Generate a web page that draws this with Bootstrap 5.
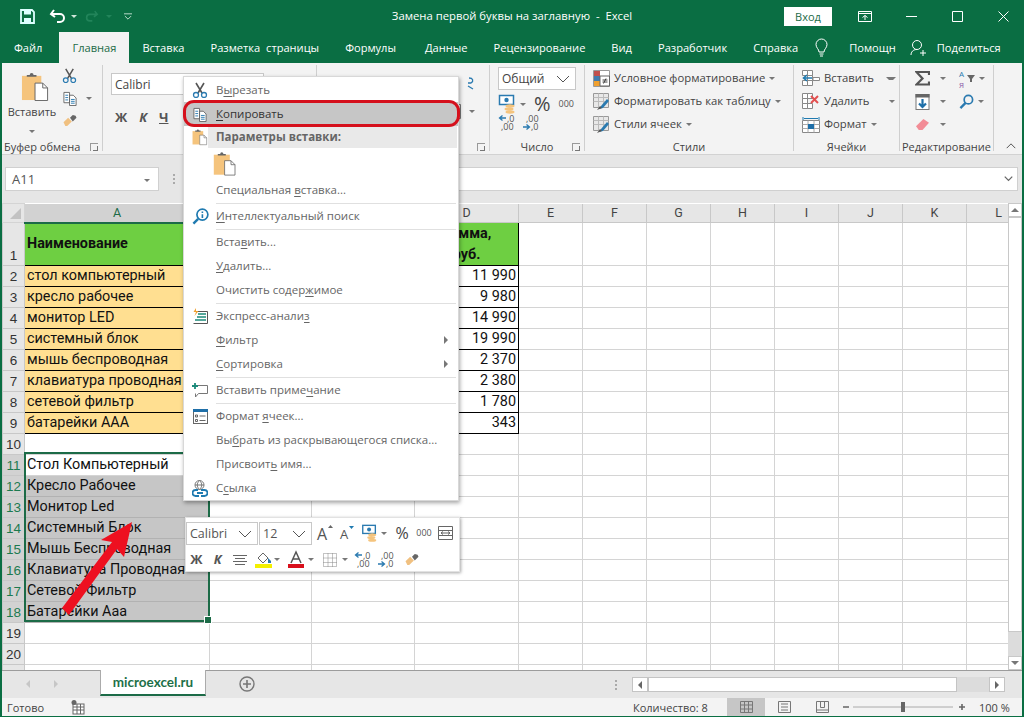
<!DOCTYPE html>
<html lang="ru">
<head>
    <meta charset="UTF-8">
    <meta name="viewport" content="width=device-width, initial-scale=1.0">
    <title>Замена первой буквы на заглавную - Excel</title>
    <link href="https://cdn.jsdelivr.net/npm/bootstrap@5.3.0/dist/css/bootstrap.min.css" rel="stylesheet">
    <style>
        html, body { margin: 0; height: 717px; overflow: hidden; }
        body { width: 1024px; font-family: "Open Sans", "Liberation Sans", sans-serif; font-size: 11px; color: #444; background: #e6e6e6; }
        svg { display: block; flex: none; overflow: visible; }
        .app { position: relative; width: 1024px; height: 717px; border-left: 2px solid #0a6e43; border-right: 2px solid #0a6e43; border-bottom: 1px solid #0a6e43; }
        .drop { width: 0; height: 0; border-left: 3px solid transparent; border-right: 3px solid transparent; border-top: 3px solid #777; flex: none; }
        .drop.lite { border-top-color: #cfe6da; }
        .drop.dim { border-top-color: #22845a; }
        .ml3 { margin-left: 3px; } .ml5 { margin-left: 5px; } .ml6 { margin-left: 6px; } .ml9 { margin-left: 9px; } .ml10 { margin-left: 10px; } .ml15 { margin-left: 15px; }

        /* title bar and tabs */
        .xl-green { background: #0a6e43; color: #fff; margin-left: -2px; margin-right: -2px; }
        .titlebar { height: 32px; display: grid; grid-template-columns: 1fr auto 1fr; align-items: center; font-size: 11.3px; }
        .qat { padding-left: 20px; }
        .win-wrap { margin-right: -2px; }
        .login { width: 48px; height: 19px; background: #fff; color: #1c6b47; line-height: 19px; text-align: center; font-size: 11px; margin-right: 10px; }
        .winbtn { width: 46px; display: flex; justify-content: center; }
        .tabsbar { height: 31px; padding-left: 1px; font-size: 11.1px; }
        .rtab { padding: 0 13px; height: 31px; line-height: 32px; white-space: nowrap; }
        .rtab.active { background: #f3f3f3; color: #1c6b47; }
        .rtab.first { padding-right: 17px; }
        .rtab.wide { word-spacing: 3px; }
        .rtab.pad-r { padding-right: 16px; }
        .rtab.help { padding: 0; margin-left: 21px; }
        .rtab.share { padding: 0; margin-left: 11px; }
        .bulb { margin-left: 4px; }
        .person { margin-left: 14px; }

        /* ribbon */
        .ribbon { height: 92px; background: #f3f3f3; border-bottom: 1px solid #d2d2d2; display: flex; position: relative; }
        .rgroup { position: relative; border-right: 1px solid #cfcfcf; height: 86px; margin-top: 2px; flex: none; }
        .rgroup-label { position: absolute; left: 0; right: 0; bottom: -4px; text-align: center; white-space: nowrap; line-height: 16px; color: #444; font-size: 11px; }
        .rgroup-label.lead-in { text-align: left; padding-left: 2px; }
        .launcher { position: absolute; right: 4px; bottom: 0; width: 8px; height: 8px; border-left: 1px solid #999; border-top: 1px solid #999; }
        .launcher::after { content: ""; position: absolute; right: 0; bottom: 0; width: 5px; height: 5px; border-right: 1px solid #777; border-bottom: 1px solid #777; }
        .g-clip { width: 101px; }
        .g-font { width: 214px; }
        .g-align { width: 173px; }
        .g-num { width: 95px; }
        .g-styles { width: 209px; padding: 2px 0 0 8px; }
        .g-cells { width: 106px; padding: 2px 0 0 8px; }
        .g-edit { width: 94px; padding: 2px 0 0 15px; }
        .paste-col { width: 60px; text-align: center; }
        .paste-col svg { margin: 7px auto 3px 19px; }
        .clip-col { padding-top: 3px; gap: 8px; }
        .inbox { background: #fff; border: 1px solid #c8c8c8; height: 23px; line-height: 21px; padding-left: 3px; color: #444; font-size: 12px; position: relative; }
        .font-name { margin: 8px 0 0 8px; width: 153px; height: 22px; }
        .font-btns { gap: 12px; margin: 14px 0 0 12px; font-weight: 700; font-size: 13px; color: #555; line-height: 16px; }
        .num-box { width: 78px; margin: 2px 0 0 8px; font-size: 12px; }
        .chev { position: absolute; right: 5px; top: 7px; }
        .style-row { height: 23px; gap: 4px; white-space: nowrap; font-size: 11.3px; }
        .zeros { font-size: 9px; color: #555; }
        .align-rest { padding: 12px 14px 0 0; gap: 14px; }
        .fig { font-family: "Open Sans", sans-serif; fill: #555; }
        .sort-a { fill: #2a7ab0; }
        .sort-z { fill: #8a5aa8; }
        .collapse-btn { margin: auto 6px 5px auto; }

        /* formula bar */
        .fxbar { height: 48px; padding: 12px 4px 12px 3px; }
        .namebox { width: 154px; height: 24px; background: #fff; border: 1px solid #d0d0d0; padding-left: 6px; line-height: 22px; font-size: 13px; color: #555; position: relative; }
        .gripdots { margin: 0 8px 0 14px; align-self: center; gap: 2px; }
        .gripdots i { display: block; width: 2px; height: 2px; background: #aaa; }
        .fxinput { flex: 1; height: 24px; background: #fff; border: 1px solid #d0d0d0; position: relative; }

        /* grid */
        .sheet-wrap { position: relative; height: 467px; overflow: hidden; background: #fff; }
        .sheet { table-layout: fixed; border-collapse: collapse; width: 1028px; font-family: Roboto, "Liberation Sans", sans-serif; font-size: 14.4px; color: #111; }
        .c-rh { width: 22px; } .c-a { width: 185px; } .c-b { width: 102px; } .c-c { width: 103px; } .c-d { width: 104px; } .c-n { width: 64px; }
        .sheet td, .sheet th { border: 1px solid #d4d4d4; padding: 0 2px; height: 21px; line-height: 18px; white-space: nowrap; overflow: visible; }
        .sheet .corner { background: #e6e6e6; height: 19px; position: relative; }
        .corner::after { content: ""; position: absolute; right: 3px; bottom: 3px; border-left: 11px solid transparent; border-bottom: 11px solid #c2c2c2; }
        .sheet th.colh { background: #e6e6e6; font-weight: 400; text-align: center; color: #444; font-size: 12.5px; height: 19px; border-color: #c8c8c8; border-top: 0; padding: 0; }
        .sheet th.colh.sel { background: #d2d2d2; color: #1c6b47; border-bottom: 2px solid #1c6b47; }
        .sheet td.rowh { background: #e6e6e6; text-align: center; color: #333; font-size: 13.5px; padding: 0; border-color: #c8c8c8; vertical-align: bottom; font-family: "Liberation Sans", sans-serif; }
        .sheet td.rowh.sel { background: #d2d2d2; color: #1c7a50; }
        .sheet tr.tall td { height: 42px; }
        .sheet td.hd { background: #6ecf42; font-weight: 700; border: 1px solid #000; }
        .sheet td.hd2 { white-space: normal; text-align: center; line-height: 21px; }
        .sheet td.yl { background: #ffdf91; border: 1px solid #000; }
        .sheet td.bd { border: 1px solid #000; }
        .sheet td.num { text-align: right; }
        .sheet td.gr { background: #c6c6c6; border-color: #b2b2b2; }
        .selbox { position: absolute; left: 22px; top: 249px; width: 186px; height: 170px; border: 2px solid #1c6b47; pointer-events: none; }
        .selbox::after { content: ""; position: absolute; right: -4px; bottom: -4px; width: 6px; height: 6px; background: #1c6b47; border: 1px solid #fff; box-sizing: content-box; }
        .vscroll { position: absolute; right: 0; top: 0; bottom: 0; width: 14px; background: #dcdcdc; display: flex; flex-direction: column; }
        .vs-btn { height: 14px; background: #fff; border: 1px solid #c8c8c8; flex: none; }
        .vs-thumb { height: 415px; background: #fff; border: 1px solid #c8c8c8; flex: none; }
        .vs-down { margin-top: auto; }
        .vs-arrow { margin: 4px auto 0; width: 0; height: 0; border-left: 4px solid transparent; border-right: 4px solid transparent; border-bottom: 4px solid #777; }
        .vs-down .vs-arrow { border-bottom: 0; border-top: 4px solid #777; }

        /* sheet tabs */
        .tabstrip { height: 28px; border-top: 1px solid #9c9c9c; position: relative; align-items: flex-start; }
        .nav-tri { width: 0; height: 0; margin-top: 9px; border-top: 4px solid transparent; border-bottom: 4px solid transparent; flex: none; }
        .nav-tri.back { margin-left: 24px; border-right: 4px solid #c6c6c6; }
        .nav-tri.fwd { margin-left: 24px; border-left: 4px solid #c6c6c6; }
        .stab { width: 106px; margin-left: 42px; height: 26px; margin-top: -1px; background: #fff; border-left: 1px solid #ababab; border-right: 1px solid #ababab; border-bottom: 2px solid #1c6b47; color: #1c7048; font-family: Lato, "Open Sans", sans-serif; font-weight: 700; font-size: 13.5px; text-align: center; line-height: 24px; flex: none; }
        .add-sheet { margin: 5px 0 0 33px; }
        .tabdots { margin: 9px 0 0 360px; gap: 2px; }
        .tabdots i { display: block; width: 2px; height: 2px; background: #aaa; }
        .hsbar { margin: 6px 0 0 15px; height: 15px; background: #dcdcdc; width: 373px; }
        .hs-btn { width: 16px; height: 15px; background: #fff; border: 1px solid #c4c4c4; display: flex; align-items: center; justify-content: center; flex: none; }
        .hs-thumb { width: 309px; height: 15px; background: #fff; border: 1px solid #c4c4c4; flex: none; }
        .hs-l { border-right: 4px solid #666; border-top: 4px solid transparent; border-bottom: 4px solid transparent; }
        .hs-r { border-left: 4px solid #666; border-top: 4px solid transparent; border-bottom: 4px solid transparent; }
        .statusbar { height: 18px; background: #f3f3f3; line-height: 17px; font-size: 11px; padding-left: 5px; white-space: nowrap; }
        .st-ready { width: 64px; flex: none; }
        .st-count { width: 76px; margin-left: 548px; flex: none; }
        .st-norm { margin-left: 18px; width: 38px; height: 18px; background: #c6c6c6; display: flex; justify-content: center; align-items: center; flex: none; }
        .st-page { margin-left: 13px; }
        .st-break { margin-left: 25px; }
        .st-zoom { margin-left: 14px; }
        .st-pct { margin-left: 14px; }

        /* context menu */
        .ctx { position: absolute; left: 181px; top: 76px; width: 276px; height: 425px; background: #fff; box-shadow: 1px 2px 4px rgba(0,0,0,.35); border: 1px solid #d8d8d8; padding-top: 1px; font-size: 11.5px; color: #666; z-index: 5; }
        .ctx-item { height: 24px; display: flex; align-items: center; position: relative; }
        .ctx-ico { width: 32px; flex: none; display: flex; justify-content: center; }
        .ctx-item.hot { background: #c6c6c6; color: #333; }
        .ctx-item u { text-underline-offset: 2px; }
        .ctx-head { height: 22px; display: flex; align-items: center; font-weight: 700; color: #666; }
        .ctx-head span { flex: 1; background: #e9e9e9; height: 22px; line-height: 22px; padding-left: 8px; margin-left: -8px; margin-right: 1px; }
        .ctx-paste { height: 30px; padding-left: 29px; }
        .ctx-sep { height: 1px; background: #e0e0e0; margin: 1px 2px 0 32px; }
        .ctx-arrow { position: absolute; right: 10px; top: 8px; border-left: 4px solid #777; border-top: 4px solid transparent; border-bottom: 4px solid transparent; }
        .redmark { position: absolute; left: -1px; top: 23px; width: 277px; height: 27px; border: 3px solid #d5101c; border-radius: 11px; pointer-events: none; }

        /* mini toolbar */
        .mini { position: absolute; left: 183px; top: 517px; width: 275px; height: 55px; background: #fff; box-shadow: 1px 1px 3px rgba(0,0,0,.35); border: 1px solid #e2e2e2; z-index: 5; padding-top: 3px; }
        .mini-box { height: 23px; border: 1px solid #c8c8c8; line-height: 21px; padding-left: 3px; font-size: 12.5px; position: relative; color: #555; flex: none; }
        .mini-font { width: 72px; }
        .mini-size { width: 53px; margin-left: 1px; }
        .mini-row2 { margin-top: 5px; font-size: 13px; color: #555; }
        .slot { display: flex; justify-content: center; flex: none; align-items: center; }
        .w21 { width: 21px; } .w22 { width: 22px; } .w24 { width: 24px; }
        .mini-a { margin-left: 2px; }
        .red-arrow { position: absolute; left: -2px; top: 0; z-index: 6; pointer-events: none; }
    </style>
</head>
<body>
<svg width="0" height="0" class="position-absolute">
    <defs>
        <symbol id="paste" viewBox="0 0 30 30"><rect x="1" y="4" width="20" height="25" fill="#f5c47d"/><path d="M6 5V3h3a2 2 0 0 1 4 0h3v2z" fill="#666"/><path d="M14.500 11.500h8l5 5v13h-13z" fill="#fff" stroke="#666"/><path d="M22.500 11.500v5h5" fill="none" stroke="#666"/></symbol>
        <symbol id="scissors" viewBox="0 0 16 16"><path d="M4 1l6 10M12 1L6 11" stroke="#555" stroke-width="1.600" fill="none"/><circle cx="4" cy="13" r="2.500" fill="none" stroke="#2a7ab0" stroke-width="1.300"/><circle cx="12" cy="13" r="2.500" fill="none" stroke="#2a7ab0" stroke-width="1.300"/></symbol>
        <symbol id="copy" viewBox="0 0 16 16"><path d="M1.500 1.500h6v11h-6zM7.500 4.500h4l3 3v8h-7z" fill="#fff" stroke="#666"/><path d="M3 4.500h3M3 7h3M3 9.500h3M9 9h4M9 11h4M9 13h4" stroke="#2a7ab0"/></symbol>
        <symbol id="brush" viewBox="0 0 16 14"><path d="M1 9l5-5 4 4-5 5H3z" fill="#f0c080"/><path d="M8 4l3-3 3 1 1 2-4 4z" fill="#666"/></symbol>
        <symbol id="money" viewBox="0 0 18 20"><rect x="1.500" y="1.500" width="14" height="9" fill="#fff" stroke="#2a7ab0" stroke-width="1.500"/><circle cx="8.500" cy="6" r="2.200" fill="#2a7ab0"/><ellipse cx="12" cy="12" rx="4.500" ry="1.700" fill="#f5c47d"/><ellipse cx="11" cy="15" rx="4.500" ry="1.700" fill="#f5c47d"/><ellipse cx="12" cy="18" rx="4.500" ry="1.700" fill="#f5c47d"/></symbol>
        <symbol id="cond" viewBox="0 0 17 17"><path d="M.5.500h16v16H.5z" fill="#fff" stroke="#999"/><rect x="1" y="1" width="6" height="5" fill="#c0504d"/><rect x="1" y="6" width="6" height="5" fill="#3f7cb0"/><rect x="1" y="11" width="6" height="5" fill="#f0a030"/><path d="M7 6h9.500v10H7z" fill="#fff" stroke="#666"/><path d="M9.500 10h5M9.500 12h5M13 8.500l-2.500 5" stroke="#444" fill="none"/></symbol>
        <symbol id="tbl" viewBox="0 0 17 17"><path d="M.5.500h15v14H.5z" fill="#e8e8e8" stroke="#999"/><path d="M.5 4.500h15M.5 8.500h15M5.500.500v14M10.500.500v14" stroke="#bbb"/><path d="M6 16l4-1 6-7-2-2-6 7z" fill="#2a7ab0"/><path d="M4 17l3-4 2 2z" fill="#555"/></symbol>
        <symbol id="cell-ins" viewBox="0 0 18 17"><path d="M5.500.500h5v5h-5zM5.500 5.500h5v5h-5zM5.500 10.500h5v5h-5zM.5 10.500h5v5h-5zM.5.500h5v5h-5z" fill="#fff" stroke="#888"/><path d="M11 7.500h6.500v3H11z" fill="#fff" stroke="#888"/><path d="M10 8H2M5 5L1.500 8 5 11" fill="none" stroke="#1f7ab0" stroke-width="1.600"/></symbol>
        <symbol id="cell-del" viewBox="0 0 18 17"><path d="M5.500.500h5v5h-5zM.5 5.500h5v5h-5zM.5 10.500h5v5h-5zM5.500 10.500h5v5h-5zM.5.500h5v5h-5z" fill="#fff" stroke="#888"/><path d="M9 3l7 7M16 3l-7 7" stroke="#e25050" stroke-width="2"/></symbol>
        <symbol id="cell-fmt" viewBox="0 0 18 17"><path d="M1 1v3M17 1v3M2 2.500h14" stroke="#1f7ab0" fill="none"/><path d="M.5 4.500h17v12H.5z" fill="#fff" stroke="#888"/><path d="M.5 8.500h17M.5 12.500h17M6 4.500v12M12 4.500v12" stroke="#aaa"/><rect x="6" y="8" width="6" height="5" fill="#1f6fa8"/></symbol>
        <symbol id="sigma" viewBox="0 0 15 15"><path d="M14 4V1H1.500l6 6.500-6 6H14v-3" fill="none" stroke="#555" stroke-width="2.200"/></symbol>
        <symbol id="fill" viewBox="0 0 14 16"><rect x=".5" y=".5" width="13" height="15" fill="#fff" stroke="#777"/><rect x="0" y="0" width="14" height="3.500" fill="#666"/><path d="M7 5v8M3.500 9.500L7 13l3.500-3.500" fill="none" stroke="#1f6fa8" stroke-width="2.200"/></symbol>
        <symbol id="find" viewBox="0 0 16 16"><circle cx="10" cy="6" r="4.500" fill="none" stroke="#2a7ab0" stroke-width="1.800"/><path d="M7 9.500L1.500 15" stroke="#2a7ab0" stroke-width="2.500"/></symbol>
        <symbol id="eraser" viewBox="0 0 16 14"><path d="M1 9l8-8 6 4-7 8H4z" fill="#f28c96"/></symbol>
        <symbol id="dec-more" viewBox="0 0 20 17"><path d="M8 4H2M4.500 1.500L1.500 4l3 2.500" fill="none" stroke="#2a7ab0" stroke-width="1.300"/><text class="fig" x="9" y="7.500" font-size="9">,0</text><text class="fig" x="3" y="16" font-size="9">,00</text></symbol>
        <symbol id="dec-less" viewBox="0 0 20 17"><text class="fig" x="4" y="7.500" font-size="9">,00</text><path d="M1 13h6M4.500 10.500L7.500 13l-3 2.500" fill="none" stroke="#2a7ab0" stroke-width="1.300"/><text class="fig" x="9" y="16" font-size="9">,0</text></symbol>
        <symbol id="search-info" viewBox="0 0 18 18"><circle cx="11" cy="7" r="5.800" fill="none" stroke="#1f7ab0" stroke-width="1.800"/><path d="M6.500 11.500L1.500 16.500" stroke="#1f7ab0" stroke-width="2.500"/><path d="M11 3.800v1.400M11 6.500v4" stroke="#1f7ab0" stroke-width="1.700"/></symbol>
        <symbol id="quick" viewBox="0 0 16 16"><path d="M3.500 3.500h12v12H1.500" fill="#fff" stroke="#555"/><path d="M6 6h8M5 9h9M3 12h11" stroke="#1c8a7a" stroke-width="1.500"/><path d="M4 0L1.500 4H4L2.500 8l4-5H4z" fill="#f0a030"/></symbol>
        <symbol id="comment" viewBox="0 0 16 16"><path d="M6 3.500h9.500v8H6.500L3.500 15v-3.500" fill="#fff" stroke="#777"/><path d="M3 1v6M0 4h6" stroke="#1c8a7a" stroke-width="1.800"/></symbol>
        <symbol id="format" viewBox="0 0 15 15"><rect x=".5" y=".5" width="14" height="14" fill="#fff" stroke="#666"/><rect width="15" height="3" fill="#1f6fa8"/><path d="M2.500 6h2v2h-2zM2.500 10.500h2v2h-2z" fill="none" stroke="#666"/><path d="M6.500 7h6M6.500 11.500h6" stroke="#666"/></symbol>
        <symbol id="link" viewBox="0 0 16 17"><circle cx="7.500" cy="5" r="4.500" fill="none" stroke="#777"/><path d="M3 5h9M7.500.500c-3 3-3 6 0 9M7.500.500c3 3 3 6 0 9" fill="none" stroke="#777"/><path d="M6 10H3.500a2.700 2.700 0 0 0 0 6H7M9 10h3.500a2.700 2.700 0 0 1 0 6H9M5 13h6" fill="none" stroke="#1f7ab0" stroke-width="1.800"/></symbol>
        <symbol id="chev" viewBox="0 0 14 8"><path d="M1 1l6 6 6-6" fill="none" stroke="#555"/></symbol>
    </defs>
</svg>

<div class="app">
    <div class="xl-green titlebar">
        <div class="d-flex align-items-center qat">
            <svg width="15" height="15" viewBox="0 0 15 15"><path d="M1 1h11l2 2v11H1z" fill="none" stroke="#dff" stroke-width="1.800"/><path d="M4 1.500h7v4H4zM4 9h7v5H4z" fill="#dff"/></svg>
            <svg class="ml15" width="16" height="14" viewBox="0 0 16 14"><path d="M4 1L1 5l4 3M1.500 5H10a4 4 0 0 1 0 8H7" fill="none" stroke="#fff" stroke-width="2"/></svg>
            <span class="drop lite ml5"></span>
            <svg class="ms-2" width="13" height="12" viewBox="0 0 16 14"><path d="M12 1l3 4-4 3M14.500 5H6a4 4 0 0 0 0 8h3" fill="none" stroke="#22845a" stroke-width="2"/></svg>
            <span class="drop dim ms-2"></span>
            <svg class="ms-2 ps-1" width="12" height="7" viewBox="0 0 9 7"><path d="M0 .5h9M1 3l3.500 3.500L8 3" fill="none" stroke="#cfe6da"/></svg>
        </div>
        <div class="text-center text-nowrap">Замена первой буквы на заглавную&nbsp; -&nbsp; Excel</div>
        <div class="d-flex align-items-center justify-content-end win-wrap">
            <div class="login">Вход</div>
            <div class="winbtn"><svg width="14" height="11" viewBox="0 0 14 11"><path d="M.5.500h13v10H.5zM.5 2.500h13M7 9V4.500M4.500 6.500L7 4.500l2.500 2" fill="none" stroke="#fff"/></svg></div>
            <div class="winbtn"><svg width="11" height="1" viewBox="0 0 11 1"><path d="M0 .5h11" stroke="#fff"/></svg></div>
            <div class="winbtn"><svg width="11" height="11" viewBox="0 0 11 11"><path d="M.5.500h10v10H.5z" fill="none" stroke="#fff"/></svg></div>
            <div class="winbtn"><svg width="11" height="11" viewBox="0 0 11 11"><path d="M.5.500l10 10M10.500.500l-10 10" stroke="#fff"/></svg></div>
        </div>
    </div>

    <div class="xl-green tabsbar d-flex">
        <div class="rtab first">Файл</div>
        <div class="rtab active">Главная</div>
        <div class="rtab">Вставка</div>
        <div class="rtab wide">Разметка страницы</div>
        <div class="rtab pad-r">Формулы</div>
        <div class="rtab">Данные</div>
        <div class="rtab">Рецензирование</div>
        <div class="rtab">Вид</div>
        <div class="rtab">Разработчик</div>
        <div class="rtab">Справка</div>
        <div class="d-flex align-items-center bulb"><svg width="13" height="18" viewBox="0 0 13 18"><path d="M4 13c0-3-3-4-3-7.500a5.500 5.500 0 0 1 11 0C12 9 9 10 9 13zM4.500 15h4M5 17h3" fill="none" stroke="#fff"/></svg></div>
        <div class="rtab help">Помощн</div>
        <div class="d-flex align-items-center person"><svg width="16" height="17" viewBox="0 0 16 17"><circle cx="7" cy="6" r="4.500" fill="none" stroke="#fff"/><path d="M1 16c0-3 2-5.500 6-5.500M10 14h6M13 11v6" fill="none" stroke="#fff"/></svg></div>
        <div class="rtab share">Поделиться</div>
    </div>

    <div class="ribbon">
        <div class="rgroup g-clip d-flex">
            <div class="paste-col">
                <svg width="29" height="29"><use href="#paste"/></svg>
                <div>Вставить</div>
                <span class="drop d-inline-block"></span>
            </div>
            <div class="d-flex flex-column clip-col">
                <svg width="15" height="15"><use href="#scissors"/></svg>
                <div class="d-flex align-items-center gap-2"><svg width="16" height="15"><use href="#copy"/></svg><span class="drop"></span></div>
                <svg width="16" height="13"><use href="#brush"/></svg>
            </div>
            <div class="rgroup-label lead-in">Буфер обмена</div>
            <span class="launcher"></span>
        </div>
        <div class="rgroup g-font">
            <div class="inbox font-name">Calibri</div>
            <div class="d-flex font-btns"><span>Ж</span><span class="fst-italic">К</span><span class="text-decoration-underline">Ч</span></div>
        </div>
        <div class="rgroup g-align">
            <div class="d-flex flex-column align-items-end align-rest">
                <svg width="8" height="13" viewBox="0 0 8 13"><path d="M2 1c4 0 5 3 2 5H1M1 9l5 3" fill="none" stroke="#2a7ab0" stroke-width="1.300"/></svg>
                <div class="d-flex align-items-center gap-2"><svg width="9" height="15" viewBox="0 0 9 15"><path d="M0 .5h8.500v14H0M0 5h8.500M0 10h8.500M3 7.500h4" fill="none" stroke="#777"/></svg><span class="drop"></span></div>
            </div>
            <span class="launcher"></span>
        </div>
        <div class="rgroup g-num">
            <div class="inbox num-box">Общий<svg class="chev" width="14" height="8"><use href="#chev"/></svg></div>
            <div class="d-flex align-items-center mt-1 ms-2">
                <svg width="18" height="20"><use href="#money"/></svg><span class="drop ms-1"></span>
                <span class="fs-5 ms-2 lh-1">%</span><span class="zeros ms-2">000</span>
            </div>
            <div class="d-flex align-items-center ms-2 gap-1">
                <svg width="20" height="17"><use href="#dec-more"/></svg>
                <svg width="20" height="17"><use href="#dec-less"/></svg>
            </div>
            <div class="rgroup-label">Число</div>
            <span class="launcher"></span>
        </div>
        <div class="rgroup g-styles">
            <div class="d-flex align-items-center style-row"><svg width="17" height="17"><use href="#cond"/></svg>Условное форматирование<span class="drop"></span></div>
            <div class="d-flex align-items-center style-row"><svg width="17" height="17"><use href="#tbl"/></svg>Форматировать как таблицу<span class="drop"></span></div>
            <div class="d-flex align-items-center style-row"><svg width="17" height="17"><use href="#tbl"/></svg>Стили ячеек<span class="drop"></span></div>
            <div class="rgroup-label">Стили</div>
        </div>
        <div class="rgroup g-cells">
            <div class="d-flex align-items-center style-row"><svg width="18" height="17"><use href="#cell-ins"/></svg>Вставить<span class="drop ms-2 ps-1"></span></div>
            <div class="d-flex align-items-center style-row"><svg width="18" height="17"><use href="#cell-del"/></svg>Удалить<span class="drop ms-3"></span></div>
            <div class="d-flex align-items-center style-row"><svg width="18" height="17"><use href="#cell-fmt"/></svg>Формат<span class="drop"></span></div>
            <div class="rgroup-label">Ячейки</div>
        </div>
        <div class="rgroup g-edit">
            <div class="d-flex align-items-center style-row"><svg width="15" height="15"><use href="#sigma"/></svg><span class="drop ml6"></span><svg class="ml9" width="16" height="18" viewBox="0 0 16 18"><text class="fig sort-a" x="0" y="7" font-size="8">А</text><text class="fig sort-z" x="0" y="18" font-size="8">Я</text><path d="M8 5h8l-3 4v3h-2V9z" fill="#666"/></svg><span class="drop"></span></div>
            <div class="d-flex align-items-center style-row"><svg width="15" height="16"><use href="#fill"/></svg><span class="drop ml6"></span><svg class="ml9" width="15" height="15"><use href="#find"/></svg><span class="drop"></span></div>
            <div class="d-flex align-items-center style-row"><svg width="15" height="13"><use href="#eraser"/></svg><span class="drop ml6"></span></div>
            <div class="rgroup-label">Редактирование</div>
        </div>
        <svg class="collapse-btn" width="10" height="6" viewBox="0 0 14 8"><path d="M1 7l6-6 6 6" fill="none" stroke="#555" stroke-width="1.400"/></svg>
    </div>

    <div class="d-flex fxbar">
        <div class="namebox">A11<span class="drop position-absolute end-0 top-50 me-2"></span></div>
        <div class="d-flex flex-column gripdots"><i></i><i></i><i></i></div>
        <div class="fxinput"><svg class="position-absolute end-0 me-1 mt-2" width="9" height="5" viewBox="0 0 14 8"><path d="M1 1l6 6 6-6" fill="none" stroke="#666" stroke-width="2"/></svg></div>
    </div>

    <div class="sheet-wrap">
        <table class="sheet">
            <colgroup><col class="c-rh"><col class="c-a"><col class="c-b"><col class="c-c"><col class="c-d"><col span="8" class="c-n"></colgroup>
            <tbody id="sheetBody"></tbody>
        </table>
        <div class="selbox"></div>
        <div class="vscroll">
            <div class="vs-btn"><div class="vs-arrow"></div></div>
            <div class="vs-thumb"></div>
            <div class="vs-btn vs-down"><div class="vs-arrow"></div></div>
        </div>
    </div>

    <div class="d-flex tabstrip">
        <span class="nav-tri back"></span>
        <span class="nav-tri fwd"></span>
        <div class="stab">microexcel.ru</div>
        <svg class="add-sheet" width="16" height="16" viewBox="0 0 16 16"><circle cx="8" cy="8" r="7" fill="none" stroke="#777" stroke-width="1.400"/><path d="M8 4v8M4 8h8" stroke="#777" stroke-width="1.600"/></svg>
        <div class="d-flex flex-column tabdots"><i></i><i></i><i></i></div>
        <div class="d-flex justify-content-between hsbar">
            <div class="d-flex">
                <div class="hs-btn"><span class="hs-l"></span></div>
                <div class="hs-thumb"></div>
            </div>
            <div class="hs-btn"><span class="hs-r"></span></div>
        </div>
    </div>
    <div class="d-flex align-items-center statusbar">
        <span class="st-ready">Готово</span>
        <svg width="14" height="14" viewBox="0 0 14 14"><rect x="2" y="4" width="11" height="10" fill="#fff" stroke="#666"/><path d="M2 7h11M2 10h11M6 4v10M9.500 4v10" stroke="#666"/><circle cx="3" cy="2.500" r="2.500" fill="#666"/></svg>
        <span class="st-count">Количество: 8</span>
        <div class="st-norm"><svg width="13" height="12" viewBox="0 0 13 12"><path d="M.5.500h12v11H.5zM.5 4h12M.5 8h12M4.500.500v11M8.500.500v11" fill="none" stroke="#777"/></svg></div>
        <svg class="st-page" width="13" height="12" viewBox="0 0 13 12"><path d="M.5.500h12v11H.5zM3 3h7M3 6h7M3 9h7" fill="none" stroke="#777"/></svg>
        <svg class="st-break" width="13" height="12" viewBox="0 0 13 12"><path d="M.5.500h12v11H.5zM4.500.500v6h4v-6M.5 9h12" fill="none" stroke="#777"/></svg>
        <svg class="st-zoom" width="122" height="12" viewBox="0 0 122 12"><path d="M0 6h6M116 6h6M119 3v6" stroke="#666" stroke-width="1.600"/><path d="M10 6h100" stroke="#aaa"/><rect x="58" y="1" width="4" height="10" fill="#666"/></svg>
        <span class="st-pct">100 %</span>
    </div>

    <div class="ctx" id="ctxMenu"></div>

    <div class="mini">
        <div class="d-flex align-items-center">
            <div class="mini-box mini-font">Calibri<svg class="chev" width="14" height="8"><use href="#chev"/></svg></div>
            <div class="mini-box mini-size">12<svg class="chev" width="14" height="8"><use href="#chev"/></svg></div>
            <div class="slot w22 mini-a"><svg width="18" height="16" viewBox="0 0 18 16"><text class="fig" x="1" y="15" font-size="16">A</text><path d="M12 3l2.500-3L17 3z" fill="#666"/></svg></div>
            <div class="slot w21"><svg width="16" height="14" viewBox="0 0 16 14"><text class="fig" x="1" y="13" font-size="13">A</text><path d="M10 0h5l-2.500 3z" fill="#1f7ab0"/></svg></div>
            <div class="slot w24"><svg width="17" height="18"><use href="#money"/></svg></div>
            <span class="drop"></span>
            <div class="slot w22 ms-1 fs-6">%</div>
            <div class="slot w22 zeros">000</div>
            <div class="slot w21"><svg width="15" height="14" viewBox="0 0 15 14"><path d="M.5.500h14v13H.5zM.5 4.500h14M.5 9.500h14M3 7h9M3 7l2-1.500M3 7l2 1.500M12 7l-2-1.500M12 7l-2 1.500" fill="none" stroke="#666"/></svg></div>
        </div>
        <div class="d-flex align-items-center mini-row2">
            <div class="slot w21"><b>Ж</b></div>
            <div class="slot w21"><b><i>К</i></b></div>
            <div class="slot w24"><svg width="14" height="10" viewBox="0 0 14 10"><path d="M0 .5h14M2 3.500h10M0 6.500h14M2 9.500h10" stroke="#666"/></svg></div>
            <div class="slot w22"><svg width="17" height="17" viewBox="0 0 17 17"><rect y="13" width="17" height="4" fill="#f4f000"/><path d="M3 7l5-5 5 5-5 5z" fill="#fff" stroke="#666"/><path d="M13 7l3 3v2h-3z" fill="#2a7ab0"/></svg></div>
            <span class="drop"></span>
            <div class="slot w24 ms-1"><svg width="16" height="16" viewBox="0 0 16 16"><rect y="12" width="16" height="4" fill="#d8101c"/><path d="M3 11L8 0l5 11M5 7h6" fill="none" stroke="#555" stroke-width="1.500"/></svg></div>
            <span class="drop"></span>
            <div class="slot w24 ms-1"><svg width="14" height="14" viewBox="0 0 14 14"><path d="M.5.500h13v13H.5zM.5 5h13M.5 9.500h13M5 .500v13M9.500.500v13" fill="none" stroke="#888" stroke-dasharray="1 1"/></svg></div>
            <span class="drop"></span>
            <div class="slot w24 ms-1"><svg width="20" height="17"><use href="#dec-more"/></svg></div>
            <div class="slot w21"><svg width="20" height="17"><use href="#dec-less"/></svg></div>
            <div class="slot w22 ms-1"><svg width="16" height="13"><use href="#brush"/></svg></div>
        </div>
    </div>

    <svg class="red-arrow" width="1024" height="717" viewBox="0 0 1024 717"><polygon points="132,522 101,540 112,542 62,608 69,615 117,549 124,557" fill="#ee1020"/></svg>
</div>

<script>
    const names = ['стол компьютерный', 'кресло рабочее', 'монитор LED', 'системный блок', 'мышь беспроводная', 'клавиатура проводная', 'сетевой фильтр', 'батарейки ААА'];
    const sums = ['11 990', '9 980', '14 990', '19 990', '2 370', '2 380', '1 780', '343'];
    const proper = ['Стол Компьютерный', 'Кресло Рабочее', 'Монитор Led', 'Системный Блок', 'Мышь Беспроводная', 'Клавиатура Проводная', 'Сетевой Фильтр', 'Батарейки Ааа'];
    // B and C sit under the context menu in the picture, so they stay empty
    const letters = ['A', '', '', 'D', 'E', 'F', 'G', 'H', 'I', 'J', 'K', 'L'];

    let html = '<tr><th class="corner"></th>' + letters.map((l, i) => `<th class="colh${i === 0 ? ' sel' : ''}">${l}</th>`).join('') + '</tr>';
    for (let r = 1; r <= 21; r++) {
        const sel = r >= 11 && r <= 18;
        let cells = '';
        for (let c = 0; c < 12; c++) {
            let cls = '', txt = '';
            if (r === 1 && c <= 3) { cls = 'hd'; txt = ['Наименование', '', '', 'Сумма,<br>руб.'][c]; if (c) cls += ' hd2'; }
            if (r >= 2 && r <= 9) {
                if (c === 0) { cls = 'yl'; txt = names[r - 2]; }
                if (c === 1 || c === 2) cls = 'bd';
                if (c === 3) { cls = 'bd num'; txt = sums[r - 2]; }
            }
            if (sel && c === 0) { txt = proper[r - 11]; if (r > 11) cls = 'gr'; }
            cells += `<td class="${cls}">${txt}</td>`;
        }
        html += `<tr class="${r === 1 ? 'tall' : ''}"><td class="rowh${sel ? ' sel' : ''}">${r < 21 ? r : ''}</td>${cells}</tr>`;
    }
    document.getElementById('sheetBody').innerHTML = html;

    const ic = (id, w, h) => `<svg width="${w}" height="${h}"><use href="#${id}"/></svg>`;
    const menu = [
        { t: 'В<u>ы</u>резать', i: ic('scissors', 16, 16) },
        { t: '<u>К</u>опировать', i: ic('copy', 16, 15), hot: true },
        { head: 'Параметры вставки:', i: ic('paste', 16, 18) },
        { paste: true },
        { t: 'Специальная <u>в</u>ставка...' },
        { sep: true },
        { t: '<u>И</u>нтеллектуальный поиск', i: ic('search-info', 17, 17) },
        { sep: true },
        { t: 'Вста<u>в</u>ить...' },
        { t: '<u>У</u>далить...' },
        { t: 'Очистить содер<u>ж</u>имое' },
        { sep: true },
        { t: 'Экспресс-анали<u>з</u>', i: ic('quick', 16, 16) },
        { t: '<u>Ф</u>ильтр', sub: true },
        { t: '<u>С</u>ортировка', sub: true },
        { sep: true },
        { t: 'Вставить приме<u>ч</u>ание', i: ic('comment', 16, 16) },
        { sep: true },
        { t: 'Формат <u>я</u>чеек...', i: ic('format', 15, 15) },
        { t: 'Вы<u>б</u>рать из раскрывающегося списка...' },
        { t: 'Присвоит<u>ь</u> имя...' },
        { t: 'С<u>с</u>ылка', i: ic('link', 16, 17) },
    ];
    document.getElementById('ctxMenu').innerHTML = menu.map(m => {
        if (m.sep) return '<div class="ctx-sep"></div>';
        if (m.paste) return `<div class="ctx-paste d-flex align-items-center">${ic('paste', 24, 27)}</div>`;
        if (m.head) return `<div class="ctx-head"><div class="ctx-ico">${m.i}</div><span>${m.head}</span></div>`;
        return `<div class="ctx-item${m.hot ? ' hot' : ''}"><div class="ctx-ico">${m.i || ''}</div><div>${m.t}</div>${m.sub ? '<span class="ctx-arrow"></span>' : ''}</div>`;
    }).join('') + '<div class="redmark"></div>';
</script>
<script src="https://cdn.jsdelivr.net/npm/bootstrap@5.3.0/dist/js/bootstrap.bundle.min.js"></script>
</body>
</html>
